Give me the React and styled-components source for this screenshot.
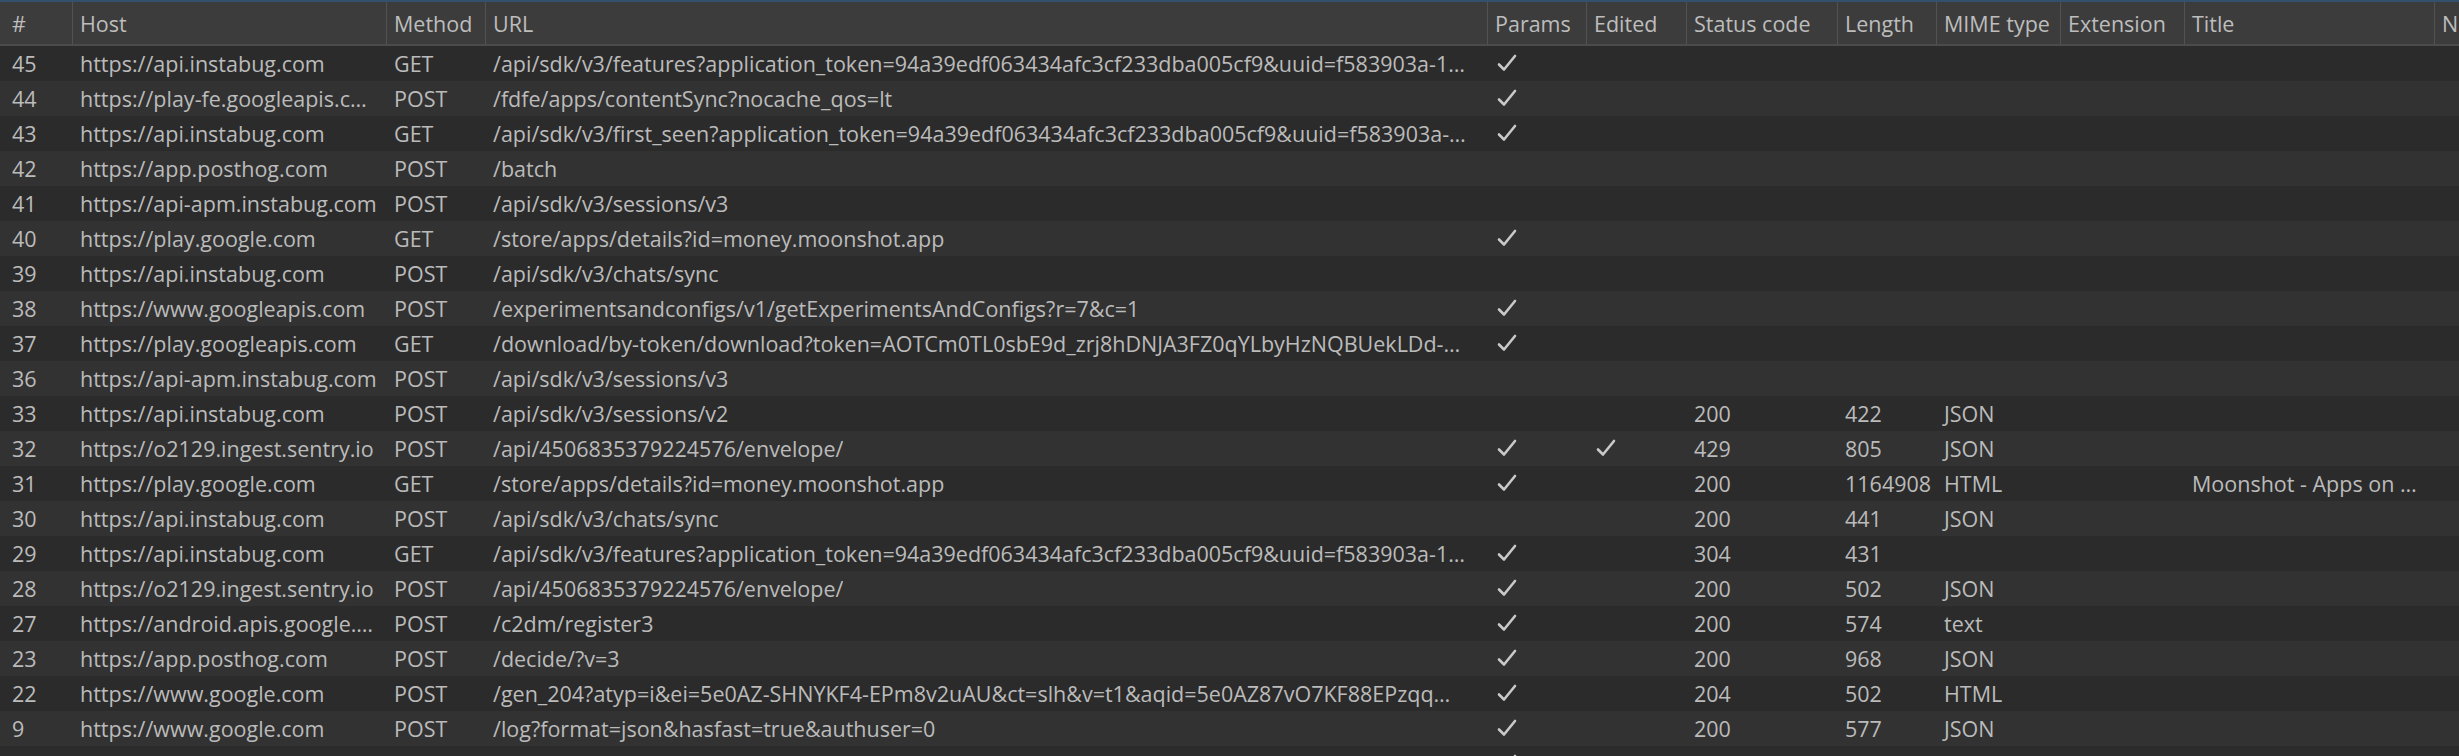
import React from "react";
import styled, { createGlobalStyle } from "styled-components";

const GlobalStyle = createGlobalStyle`
  html, body {
    margin: 0;
    padding: 0;
    background: #2b2b2b;
    overflow: hidden;
  }
  body {
    font-family: "Open Sans", "Noto Sans", sans-serif;
    color: #bbbbbb;
  }
`;

const COLUMNS = "72px 314px 99px 1002px 99px 100px 151px 99px 124px 124px 250px 1fr";

const Table = styled.div`
  width: 100%;
  height: 756px;
  overflow: hidden;
  border-top: 2px solid #34506f;
`;

const HeaderRow = styled.div`
  display: grid;
  grid-template-columns: ${COLUMNS};
  height: 42px;
  background: #3c3c3c;
  border-bottom: 2px solid #4b4b4b;
`;

const HeaderCell = styled.div`
  display: flex;
  align-items: center;
  padding: 1px 0 0 ${(p) => (p.$first ? "12px" : "7px")};
  border-left: ${(p) => (p.$first ? "none" : "1px solid #525252")};
  font-size: 21.5px;
  color: #bdbdbd;
  white-space: nowrap;
  overflow: hidden;
`;

const Row = styled.div`
  display: grid;
  grid-template-columns: ${COLUMNS};
  height: 35px;
  background: ${(p) => (p.$odd ? "#323232" : "#2b2b2b")};
`;

const Cell = styled.div`
  display: flex;
  align-items: center;
  padding-left: ${(p) => (p.$first ? "12px" : "8px")};
  font-size: 21.5px;
  color: #bbbbbb;
  white-space: nowrap;
  overflow: hidden;
  text-overflow: ellipsis;
  min-width: 0;
`;

const Text = styled.span`
  overflow: hidden;
  text-overflow: ellipsis;
  white-space: nowrap;
`;

const CheckIcon = styled.svg`
  width: 22px;
  height: 20px;
  margin-left: 1px;
  margin-top: -1px;
`;

function Check() {
  return (
    <CheckIcon viewBox="0 0 22 20" aria-label="✓">
      <path
        d="M3 11.5 L8 16.5 L19 3"
        fill="none"
        stroke="#c9c9c9"
        strokeWidth="2.6"
        strokeLinecap="round"
        strokeLinejoin="round"
      />
    </CheckIcon>
  );
}

const headers = [
  "#",
  "Host",
  "Method",
  "URL",
  "Params",
  "Edited",
  "Status code",
  "Length",
  "MIME type",
  "Extension",
  "Title",
  "N",
];

const rows = [
  ["45", "https://api.instabug.com", "GET", "/api/sdk/v3/features?application_token=94a39edf063434afc3cf233dba005cf9&uuid=f583903a-1…", true, false, "", "", "", "", ""],
  ["44", "https://play-fe.googleapis.c…", "POST", "/fdfe/apps/contentSync?nocache_qos=lt", true, false, "", "", "", "", ""],
  ["43", "https://api.instabug.com", "GET", "/api/sdk/v3/first_seen?application_token=94a39edf063434afc3cf233dba005cf9&uuid=f583903a-…", true, false, "", "", "", "", ""],
  ["42", "https://app.posthog.com", "POST", "/batch", false, false, "", "", "", "", ""],
  ["41", "https://api-apm.instabug.com", "POST", "/api/sdk/v3/sessions/v3", false, false, "", "", "", "", ""],
  ["40", "https://play.google.com", "GET", "/store/apps/details?id=money.moonshot.app", true, false, "", "", "", "", ""],
  ["39", "https://api.instabug.com", "POST", "/api/sdk/v3/chats/sync", false, false, "", "", "", "", ""],
  ["38", "https://www.googleapis.com", "POST", "/experimentsandconfigs/v1/getExperimentsAndConfigs?r=7&c=1", true, false, "", "", "", "", ""],
  ["37", "https://play.googleapis.com", "GET", "/download/by-token/download?token=AOTCm0TL0sbE9d_zrj8hDNJA3FZ0qYLbyHzNQBUekLDd-…", true, false, "", "", "", "", ""],
  ["36", "https://api-apm.instabug.com", "POST", "/api/sdk/v3/sessions/v3", false, false, "", "", "", "", ""],
  ["33", "https://api.instabug.com", "POST", "/api/sdk/v3/sessions/v2", false, false, "200", "422", "JSON", "", ""],
  ["32", "https://o2129.ingest.sentry.io", "POST", "/api/4506835379224576/envelope/", true, true, "429", "805", "JSON", "", ""],
  ["31", "https://play.google.com", "GET", "/store/apps/details?id=money.moonshot.app", true, false, "200", "1164908", "HTML", "", "Moonshot - Apps on …"],
  ["30", "https://api.instabug.com", "POST", "/api/sdk/v3/chats/sync", false, false, "200", "441", "JSON", "", ""],
  ["29", "https://api.instabug.com", "GET", "/api/sdk/v3/features?application_token=94a39edf063434afc3cf233dba005cf9&uuid=f583903a-1…", true, false, "304", "431", "", "", ""],
  ["28", "https://o2129.ingest.sentry.io", "POST", "/api/4506835379224576/envelope/", true, false, "200", "502", "JSON", "", ""],
  ["27", "https://android.apis.google.…", "POST", "/c2dm/register3", true, false, "200", "574", "text", "", ""],
  ["23", "https://app.posthog.com", "POST", "/decide/?v=3", true, false, "200", "968", "JSON", "", ""],
  ["22", "https://www.google.com", "POST", "/gen_204?atyp=i&ei=5e0AZ-SHNYKF4-EPm8v2uAU&ct=slh&v=t1&aqid=5e0AZ87vO7KF88EPzqq…", true, false, "204", "502", "HTML", "", ""],
  ["9", "https://www.google.com", "POST", "/log?format=json&hasfast=true&authuser=0", true, false, "200", "577", "JSON", "", ""],
  ["8", "https://play.googleapis.com", "POST", "/log/batch?format=json&hasfast=true", true, false, "200", "590", "JSON", "", ""],
];

export default function App() {
  return (
    <>
      <GlobalStyle />
      <Table>
        <HeaderRow>
          {headers.map((h, i) => (
            <HeaderCell key={h} $first={i === 0}>
              {h}
            </HeaderCell>
          ))}
        </HeaderRow>
        {rows.map((r, i) => (
          <Row key={r[0]} $odd={i % 2 === 1}>
            <Cell $first>{r[0]}</Cell>
            <Cell><Text>{r[1]}</Text></Cell>
            <Cell>{r[2]}</Cell>
            <Cell><Text>{r[3]}</Text></Cell>
            <Cell>{r[4] && <Check />}</Cell>
            <Cell>{r[5] && <Check />}</Cell>
            <Cell>{r[6]}</Cell>
            <Cell>{r[7]}</Cell>
            <Cell>{r[8]}</Cell>
            <Cell>{r[9]}</Cell>
            <Cell><Text>{r[10]}</Text></Cell>
            <Cell />
          </Row>
        ))}
      </Table>
    </>
  );
}
